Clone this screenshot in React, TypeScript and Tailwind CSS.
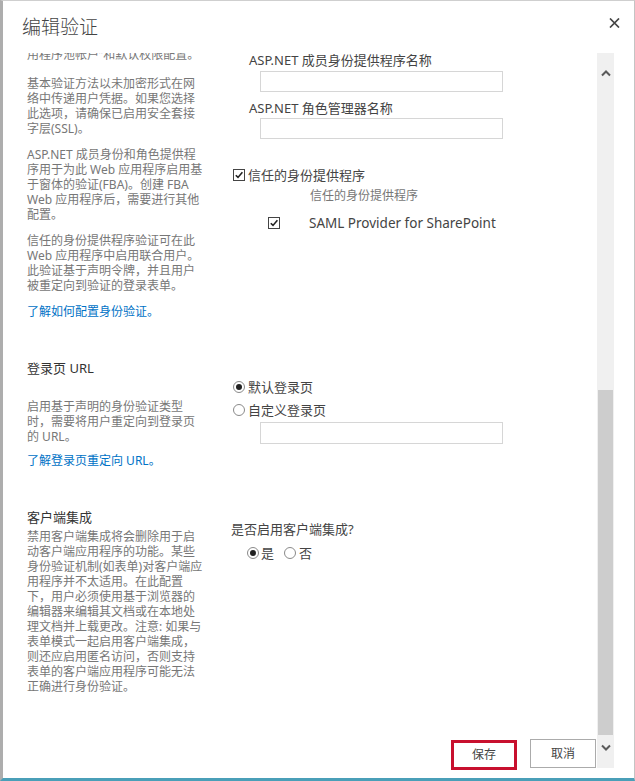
import { type ReactNode } from "react";

const font = { fontFamily: '"Segoe UI", "Noto Sans", "Noto Sans CJK SC", sans-serif' };

const Lines = ({ lines, className = "" }: { lines: string[]; className?: string }) => (
  <div className={className}>
    {lines.map((l, i) => (
      <div key={i} className="whitespace-nowrap">
        {l}
      </div>
    ))}
  </div>
);

const Desc = ({ lines, className = "" }: { lines: string[]; className?: string }) => (
  <Lines lines={lines} className={"text-[12px] leading-[15px] text-[#777] " + className} />
);

const Link = ({ children, className = "" }: { children: ReactNode; className?: string }) => (
  <div className={"text-[12px] leading-[15px] text-[#0072c6] whitespace-nowrap " + className}>{children}</div>
);

const Checkbox = () => (
  <span className="w-[12px] h-[12px] border border-[#444] bg-white flex items-center justify-center shrink-0">
    <svg width="10" height="10" viewBox="0 0 10 10">
      <path d="M1.8 5.2 L4 7.4 L8.4 2.2" fill="none" stroke="#222" strokeWidth="1.6" />
    </svg>
  </span>
);

const Radio = ({ checked, className = "" }: { checked?: boolean; className?: string }) => (
  <span className={"w-[12px] h-[12px] rounded-full border border-[#8a8a8a] bg-white flex items-center justify-center shrink-0 " + className}>
    {checked && <span className="w-[6px] h-[6px] rounded-full bg-[#222]" />}
  </span>
);

const TextBox = ({ className = "" }: { className?: string }) => (
  <div className={"ml-[29px] w-[243px] border border-[#d6d6d6] bg-white " + className} />
);

const Chevron = ({ down }: { down?: boolean }) => (
  <svg width="10" height="7" viewBox="0 0 10 7">
    <path d={down ? "M1 1.5 L5 5.5 L9 1.5" : "M1 5.5 L5 1.5 L9 5.5"} fill="none" stroke="#5a5a5a" strokeWidth="2" />
  </svg>
);

const para1 = ["基本验证方法以未加密形式在网", "络中传递用户凭据。如果您选择", "此选项，请确保已启用安全套接", "字层(SSL)。"];
const para2 = [
  "ASP.NET 成员身份和角色提供程",
  "序用于为此 Web 应用程序启用基",
  "于窗体的验证(FBA)。创建 FBA",
  "Web 应用程序后，需要进行其他",
  "配置。",
];
const para3 = ["信任的身份提供程序验证可在此", "Web 应用程序中启用联合用户。", "此验证基于声明令牌，并且用户", "被重定向到验证的登录表单。"];
const loginDesc = ["启用基于声明的身份验证类型", "时，需要将用户重定向到登录页", "的 URL。"];
const clientDesc = [
  "禁用客户端集成将会删除用于启",
  "动客户端应用程序的功能。某些",
  "身份验证机制(如表单)对客户端应",
  "用程序并不太适用。在此配置",
  "下，用户必须使用基于浏览器的",
  "编辑器来编辑其文档或在本地处",
  "理文档并上载更改。注意: 如果与",
  "表单模式一起启用客户端集成，",
  "则还应启用匿名访问，否则支持",
  "表单的客户端应用程序可能无法",
  "正确进行身份验证。",
];

const App = () => {
  return (
    <div
      style={font}
      className="w-[635px] h-[781px] bg-white border-l-[3px] border-l-[#adadad] border-t border-t-[#cfcfcf] border-r border-r-[#c4c4c4] border-b-[3px] border-b-[#4a9fb8] flex flex-col overflow-hidden"
    >
      {/* header */}
      <div className="h-[52px] shrink-0 flex items-start justify-between pl-[19px] pr-[14px]">
        <div className="mt-[13px] text-[19px] leading-[26px] text-[#444] font-light">编辑验证</div>
        <svg width="11" height="10" viewBox="0 0 11 10" className="mt-[17px]">
          <path d="M1 0.5 L10 9.5 M10 0.5 L1 9.5" stroke="#444" strokeWidth="1.7" />
        </svg>
      </div>

      {/* body */}
      <div className="h-[717px] shrink-0 flex">
        <div className="w-[594px] overflow-hidden flex flex-col justify-between">
          <div className="-mt-[5px] pl-[24px]">
            {/* auth types */}
            <div className="grid grid-cols-[204px_1fr]">
              <div>
                <Desc lines={["用程序池帐户”和默认权限配置。"]} className="-mt-[1px] mb-[14px]" />
                <Desc lines={para1} className="mb-[11px]" />
                <Desc lines={para2} className="mb-[11px]" />
                <Desc lines={para3} className="mb-[11px]" />
                <Link>了解如何配置身份验证。</Link>
              </div>
              <div className="pt-[3px] text-[13px] leading-[18px] text-[#444]">
                <div className="pl-[18px] whitespace-nowrap">ASP.NET 成员身份提供程序名称</div>
                <TextBox className="mt-[2px] h-[21px]" />
                <div className="mt-[7px] pl-[18px] whitespace-nowrap">ASP.NET 角色管理器名称</div>
                <TextBox className="mt-[1px] h-[21px]" />
                <div className="mt-[27px] flex items-center gap-[3px] pl-[2px] whitespace-nowrap">
                  <Checkbox />
                  <span>信任的身份提供程序</span>
                </div>
                <div className="mt-[4px] pl-[79px] text-[12px] leading-[16px] text-[#777] whitespace-nowrap">信任的身份提供程序</div>
                <div className="mt-[9px] h-[20px] flex items-center pl-[37px] whitespace-nowrap">
                  <Checkbox />
                  <span className="ml-[29px] text-[13.5px]">SAML Provider for SharePoint</span>
                </div>
              </div>
            </div>

            {/* sign in page */}
            <div className="grid grid-cols-[204px_1fr] mt-[40px]">
              <div>
                <div className="text-[13px] leading-[18px] text-[#333]">登录页 URL</div>
                <Desc lines={loginDesc} className="mt-[22px]" />
                <Link className="mt-[9px]">了解登录页重定向 URL。</Link>
              </div>
              <div className="pt-[18px] text-[13px] leading-[20px] text-[#444]">
                <div className="flex items-center gap-[3px] pl-[2px] whitespace-nowrap">
                  <Radio checked />
                  <span>默认登录页</span>
                </div>
                <div className="mt-[3px] flex items-center gap-[3px] pl-[2px] whitespace-nowrap">
                  <Radio />
                  <span>自定义登录页</span>
                </div>
                <TextBox className="mt-[2px] h-[22px]" />
              </div>
            </div>

            {/* client integration */}
            <div className="grid grid-cols-[204px_1fr] mt-[40px]">
              <div>
                <div className="text-[13px] leading-[18px] text-[#333]">客户端集成</div>
                <Desc lines={clientDesc} className="mt-[3px] leading-[15.3px]" />
              </div>
              <div className="pt-[12px] text-[13px] leading-[18px] text-[#444]">
                <div className="whitespace-nowrap">是否启用客户端集成?</div>
                <div className="mt-[5px] h-[20px] flex items-center pl-[16px] whitespace-nowrap">
                  <Radio checked />
                  <span className="ml-[2px]">是</span>
                  <Radio className="ml-[10px]" />
                  <span className="ml-[3px]">否</span>
                </div>
              </div>
            </div>
          </div>

          {/* buttons */}
          <div className="h-[31px] flex items-start justify-end gap-[13px] pr-[1px]">
            <button className="mt-[1px] w-[66px] h-[30px] border-[3px] border-[#c8102e] bg-white text-[12px] text-[#444]">保存</button>
            <button className="w-[66px] h-[29px] border border-[#ababab] bg-white text-[12px] text-[#444]">取消</button>
          </div>
        </div>

        {/* scrollbar */}
        <div className="w-[17px] h-[715px] bg-[#f0f0f0] flex flex-col">
          <div className="h-[40px] flex items-center justify-center">
            <Chevron />
          </div>
          <div className="h-[297px]" />
          <div className="h-[345px] mx-[1px] bg-[#cdcdcd]" />
          <div className="h-[33px] flex justify-center pt-[9px]">
            <Chevron down />
          </div>
        </div>
      </div>
    </div>
  );
};

export default App;
